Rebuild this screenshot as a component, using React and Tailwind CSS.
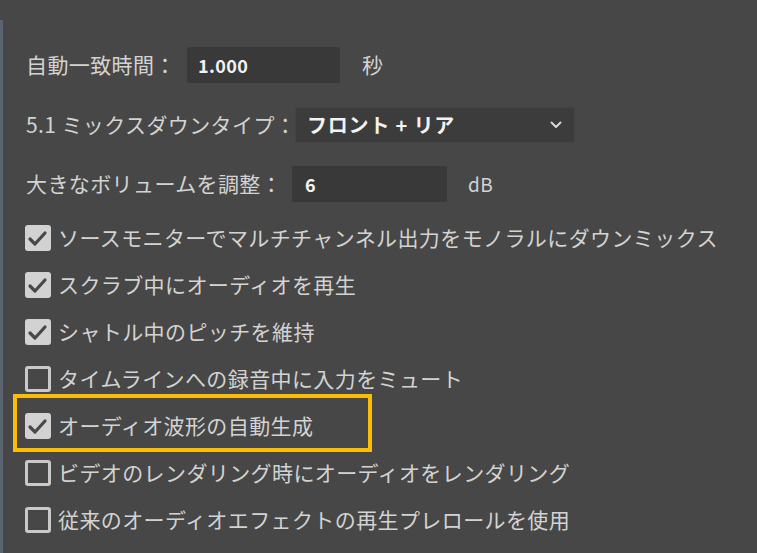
import React from "react";

const font = { fontFamily: '"Noto Sans CJK JP", "Noto Sans", sans-serif' };

const options = [
  { label: "ソースモニターでマルチチャンネル出力をモノラルにダウンミックス", checked: true },
  { label: "スクラブ中にオーディオを再生", checked: true },
  { label: "シャトル中のピッチを維持", checked: true },
  { label: "タイムラインへの録音中に入力をミュート", checked: false },
  { label: "オーディオ波形の自動生成", checked: true, highlight: true },
  { label: "ビデオのレンダリング時にオーディオをレンダリング", checked: false },
  { label: "従来のオーディオエフェクトの再生プレロールを使用", checked: false },
];

const CheckBox = ({ checked }) => {
  if (!checked) {
    return <div className="w-[26px] h-[26px] shrink-0 rounded-[3px] border-[3px] border-[#c9c9c9]" />;
  }
  return (
    <div className="w-[26px] h-[26px] shrink-0 rounded-[3px] bg-[#d2d2d2] flex items-center justify-center">
      <svg width="26" height="26" viewBox="0 0 26 26">
        <path d="M5 14 L10 19 L20 8" fill="none" stroke="#484848" strokeWidth="3.2" strokeLinecap="round" strokeLinejoin="round" />
      </svg>
    </div>
  );
};

export default function App() {
  return (
    <div className="w-[757px] h-[553px] bg-[#474747] relative overflow-hidden text-[#d3d3d3] text-[21px] tracking-[0.4px]" style={font}>
      <div className="absolute left-0 top-[20px] bottom-0 w-[3px] bg-[#5b6571]" />

      <div className="flex flex-col pt-[47px]">
        <div className="flex items-center h-9">
          <span className="ml-[26px] w-[161px] whitespace-nowrap">自動一致時間：</span>
          <div className="w-[153px] h-9 bg-[#393939] rounded-[2px] flex items-center pl-[11px] text-[18px] font-semibold text-[#f2f2f2]">
            1.000
          </div>
          <span className="ml-[22px]">秒</span>
        </div>

        <div className="flex items-center h-9 mt-[24px]">
          <span className="ml-[26px] w-[269px] whitespace-nowrap">5.1 ミックスダウンタイプ：</span>
          <div className="w-[280px] h-9 bg-[#3c3c3c] border border-[#434343] rounded-[2px] flex items-center justify-between pl-[11px] pr-[12px] text-[20px] font-bold text-[#f2f2f2] tracking-[0.8px]">
            <span>フロント + リア</span>
            <svg width="12" height="8" viewBox="0 0 12 8">
              <path d="M1.5 1.5 L6 6 L10.5 1.5" fill="none" stroke="#dcdcdc" strokeWidth="1.8" strokeLinecap="round" strokeLinejoin="round" />
            </svg>
          </div>
        </div>

        <div className="flex items-center h-9 mt-[23px]">
          <span className="ml-[26px] w-[266px] whitespace-nowrap">大きなボリュームを調整：</span>
          <div className="w-[155px] h-9 bg-[#393939] rounded-[2px] flex items-center pl-[13px] text-[18px] font-semibold text-[#f2f2f2]">
            6
          </div>
          <span className="ml-[21px] text-[19px]">dB</span>
        </div>

        <div className="flex flex-col mt-[12px]">
          {options.map((o) => (
            <div key={o.label} className="relative flex items-center h-[47px] pl-[25px] gap-[7px]">
              {o.highlight && (
                <div className="absolute left-[13px] top-[-8px] w-[359px] h-[58px] border-4 border-[#fbbd08]" />
              )}
              <CheckBox checked={o.checked} />
              <span className="whitespace-nowrap">{o.label}</span>
            </div>
          ))}
        </div>
      </div>
    </div>
  );
}
